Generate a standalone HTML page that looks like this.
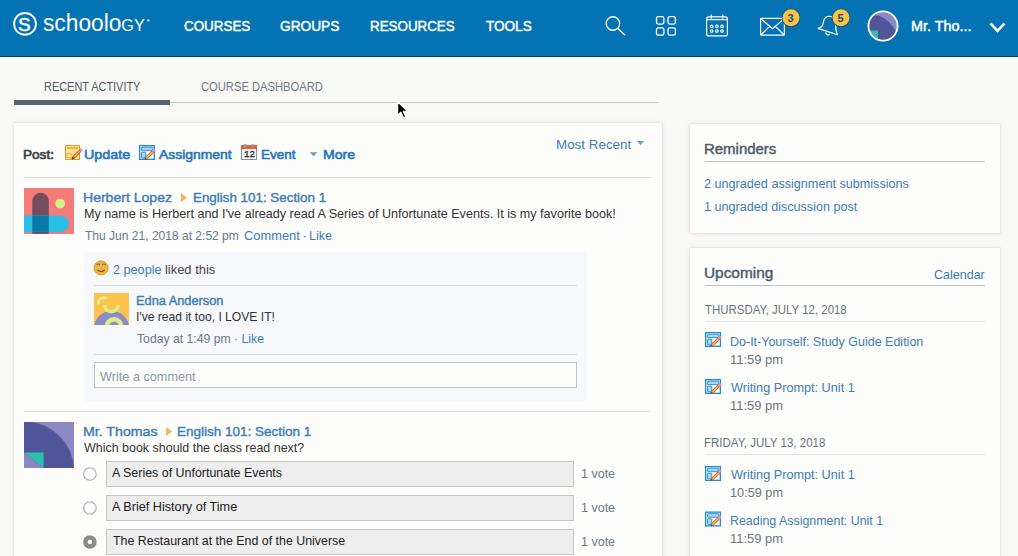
<!DOCTYPE html>
<html><head><meta charset="utf-8">
<style>
*{margin:0;padding:0;box-sizing:border-box}
html,body{width:1018px;height:556px;overflow:hidden;background:#f8f8f4;font-family:"Liberation Sans",sans-serif}
body{position:relative}
.r{position:absolute}
.a{position:absolute;white-space:nowrap;line-height:1;transform-origin:0 0}
.card{background:#fdfdfb;box-shadow:0 0 1px rgba(160,130,140,.35),0 0 4px rgba(205,175,185,.35)}
.opt{background:#eeeeee;border:1px solid #c6c6c6}
</style></head><body>
<div class="r" style="left:0;top:0;width:1018px;height:56px;background:#0373b3"></div>
<div class="r" style="left:0;top:56px;width:1018px;height:1px;background:#163a52"></div>
<div class="r" style="left:0;top:57px;width:1018px;height:1px;background:#fdfdfb"></div>
<!-- logo -->
<svg class="r" style="left:0;top:0" width="40" height="50" viewBox="0 0 40 50">
  <circle cx="25" cy="23.9" r="10.9" fill="none" stroke="#fff" stroke-width="1.9"/>
</svg>
<svg class="r" style="left:144px;top:16px" width="8" height="8" viewBox="144 16 8 8"><circle cx="148.3" cy="20.3" r="1.4" fill="#9cc3df"/></svg>
<!-- search -->
<svg class="r" style="left:600px;top:10px" width="30" height="30" viewBox="600 10 30 30">
  <circle cx="612.9" cy="23.5" r="6.75" fill="none" stroke="#fff" stroke-width="1.3"/>
  <line x1="617.9" y1="28.5" x2="625.2" y2="35.2" stroke="#fff" stroke-width="1.3"/>
</svg>
<!-- grid -->
<svg class="r" style="left:650px;top:10px" width="32" height="32" viewBox="650 10 32 32">
  <g fill="none" stroke="#fff" stroke-width="1.3">
  <rect x="656.5" y="16.7" width="7.4" height="7.4" rx="1.8"/>
  <rect x="668" y="16.7" width="7.4" height="7.4" rx="1.8"/>
  <rect x="656.5" y="27.8" width="7.4" height="7.4" rx="1.8"/>
  <rect x="668" y="27.8" width="7.4" height="7.4" rx="1.8"/>
  </g>
</svg>
<!-- calendar -->
<svg class="r" style="left:700px;top:10px" width="34" height="32" viewBox="700 10 34 32">
  <g fill="none" stroke="#fff" stroke-width="1.2">
  <rect x="706.6" y="16.9" width="20.8" height="19" rx="2.2"/>
  <line x1="706.6" y1="19.6" x2="727.4" y2="19.6"/>
  <line x1="711.2" y1="14.5" x2="711.2" y2="18.5"/>
  <line x1="722.8" y1="14.5" x2="722.8" y2="18.5"/>
  <circle cx="711.7" cy="26.4" r="1.25"/><circle cx="716.9" cy="26.4" r="1.25"/><circle cx="722" cy="26.4" r="1.25"/>
  <circle cx="711.7" cy="31" r="1.25"/><circle cx="716.9" cy="31" r="1.25"/><circle cx="722" cy="31" r="1.25"/>
  </g>
</svg>
<!-- mail -->
<svg class="r" style="left:755px;top:5px" width="50" height="36" viewBox="755 5 50 36">
  <g fill="none" stroke="#fff" stroke-width="1.2">
  <rect x="760.6" y="18.4" width="23.8" height="16.8" rx="0.8"/>
  <polyline points="760.8,18.6 772.5,28.8 784.2,18.6"/>
  <line x1="760.8" y1="35" x2="769.5" y2="26.5"/>
  <line x1="784.2" y1="35" x2="775.5" y2="26.5"/>
  </g>
  <circle cx="791" cy="17.8" r="9.3" fill="#1d4f73"/>
  <circle cx="791" cy="17.8" r="8.5" fill="#f9c34b"/>
</svg>
<div class="a" style="left:787.4px;top:13.2px;font-size:11px;font-weight:bold;color:#1c4a6b">3</div>
<!-- bell -->
<svg class="r" style="left:812px;top:5px" width="45" height="36" viewBox="812 5 45 36">
  <g fill="none" stroke="#fff" stroke-width="1.2" stroke-linejoin="round">
  <path d="M818.2,28.4 C822.5,27 823,25.5 823.5,21.5 C824.2,16.8 828,15.5 832,16.7 C835,17.8 836.5,20.5 835.8,24.5 C835.2,28.5 836,31 837.4,34.8 Z"/>
  <path d="M826.2,32.2 C825.2,34.5 828.2,35.8 830,34"/>
  </g>
  <circle cx="841" cy="17.8" r="9.3" fill="#1d4f73"/>
  <circle cx="841" cy="17.8" r="8.5" fill="#f9c34b"/>
</svg>
<div class="a" style="left:837.6px;top:13.2px;font-size:11px;font-weight:bold;color:#1c4a6b">5</div>
<!-- header avatar -->
<svg class="r" style="left:866px;top:9px" width="34" height="34" viewBox="866 9 34 34">
  <defs><clipPath id="hav"><circle cx="883" cy="26" r="14.2"/></clipPath></defs>
  <g clip-path="url(#hav)">
    <rect x="866" y="9" width="34" height="34" fill="#8b89c1"/>
    <circle cx="868.5" cy="44" r="30" fill="#50559a"/>
    <polygon points="868.5,30.5 878,30.5 878,41 " fill="#2fbfae"/>
  </g>
  <circle cx="883" cy="26" r="14.6" fill="none" stroke="#fff" stroke-width="1.8"/>
</svg>
<!-- chevron -->
<svg class="r" style="left:985px;top:15px" width="25" height="22" viewBox="985 15 25 22">
  <polyline points="990.5,23.3 997.5,30.8 1004.5,23.3" fill="none" stroke="#fff" stroke-width="2.6"/>
</svg>

<!-- tabs -->
<div class="r" style="left:14px;top:102px;width:645px;height:1px;background:#c5cbd1"></div>
<div class="r" style="left:14px;top:100px;width:156px;height:5px;background:#56636c"></div>

<!-- cards -->
<div class="r card" style="left:14px;top:123px;width:648px;height:460px"></div>
<div class="r card" style="left:690px;top:124px;width:310px;height:109px"></div>
<div class="r card" style="left:690px;top:248px;width:310px;height:340px"></div>

<!-- toolbar icons -->
<svg class="r" style="left:62px;top:142px" width="22" height="22" viewBox="62 142 22 22">
  <rect x="65.5" y="145.5" width="14" height="14" fill="#fde38a" stroke="#e09a3e" stroke-width="1"/>
  <rect x="67" y="147" width="11" height="2" fill="#f5b13f"/>
  <rect x="67" y="153.5" width="4" height="4" fill="none" stroke="#e3a252" stroke-width="0.8"/>
  <line x1="73" y1="158" x2="80.5" y2="150.5" stroke="#c4452c" stroke-width="2.8"/>
  <line x1="73.4" y1="157.6" x2="80" y2="151" stroke="#f8b850" stroke-width="1.4"/>
  <line x1="80" y1="151" x2="82" y2="149" stroke="#e58cc0" stroke-width="2.6"/>
  <line x1="72" y1="159" x2="73.5" y2="157.5" stroke="#5a3a36" stroke-width="1.8"/>
</svg>

<svg class="r" style="left:238px;top:141px" width="22" height="22" viewBox="238 141 22 22">
  <rect x="241.5" y="147.5" width="15" height="12" fill="#fff" stroke="#8a8f94" stroke-width="1"/>
  <rect x="241" y="145" width="16" height="4" fill="#ea5e2e"/>
  <rect x="244.2" y="144" width="2.2" height="3.6" fill="#8aa0b4"/>
  <rect x="251.6" y="144" width="2.2" height="3.6" fill="#8aa0b4"/>
  <rect x="242.5" y="149.5" width="13" height="9" fill="#eef1f4"/><text x="244.1" y="157" font-family="Liberation Mono" font-size="9" fill="#1a1a1a" stroke="#1a1a1a" stroke-width="0.25">12</text>
</svg>
<svg class="r" style="left:306px;top:150px" width="14" height="9" viewBox="306 150 14 9">
  <polygon points="309.6,152.3 317.4,152.3 313.5,156.3" fill="#6b9bcb"/>
</svg>
<svg class="r" style="left:634px;top:138px" width="14" height="9" viewBox="634 138 14 9">
  <polygon points="636.8,141 644.2,141 640.5,145" fill="#6b9bcb"/>
</svg>

<div class="r" style="left:24px;top:177px;width:627px;height:1px;background:#dedede"></div>

<!-- Herbert avatar -->
<svg class="r" style="left:24px;top:188px" width="50" height="46" viewBox="24 188 50 46">
  <rect x="24" y="188" width="50" height="46" fill="#f47b78"/>
  <path d="M32.3,234 V201 a8.25,8.25 0 0 1 16.5,0 V234 Z" fill="#744e5e"/>
  <path d="M24,215.5 H60.6 a8.2,8.2 0 0 1 0,16.4 H24 Z" fill="#29bfe9"/>
  <rect x="32.3" y="215.5" width="16.5" height="16.4" fill="#0a78a9"/>
  <circle cx="60.1" cy="203.6" r="4.9" fill="#d9f18a"/>
</svg>

<!-- liked box -->
<div class="r" style="left:84px;top:252px;width:503px;height:149px;background:#f7f8fb"></div>
<svg class="r" style="left:92px;top:259px" width="18" height="18" viewBox="92 259 18 18">
  <circle cx="101.1" cy="267.9" r="7" fill="#f3b533" stroke="#d98b2a" stroke-width="0.9"/>
  <ellipse cx="98.3" cy="266" rx="1.6" ry="1.2" fill="#a5b9dd"/>
  <ellipse cx="103.9" cy="266" rx="1.6" ry="1.2" fill="#a5b9dd"/>
  <path d="M96.6,264.6 Q98.3,263.4 100,264.6 M102.2,264.6 Q103.9,263.4 105.6,264.6" stroke="#7a3f1c" stroke-width="0.9" fill="none"/>
  <path d="M97.5,270 Q101.1,273 104.7,270" stroke="#8a4a1a" stroke-width="1.1" fill="none"/>
</svg>
<div class="r" style="left:94px;top:285px;width:483px;height:1px;background:#dcdcdc"></div>
<svg class="r" style="left:94px;top:293px" width="35" height="32" viewBox="94 293 35 32">
  <rect x="94" y="293" width="35" height="32" fill="#fcc24b"/>
  <circle cx="111.6" cy="328.4" r="17.5" fill="#8e8ac3"/>
  <path d="M98.4,304.3 A5.8,5.8 0 0 1 106.6,298.2" stroke="#d7f08b" stroke-width="2.9" fill="none"/>
  <path d="M104.6,305 A6.75,6.75 0 0 0 118.1,305" stroke="#d7f08b" stroke-width="3.3" fill="none"/>
  <path d="M106.9,326.5 A7.1,7.1 0 0 1 121.1,326.5" stroke="#d7f08b" stroke-width="4.6" fill="none"/>
</svg>
<div class="r" style="left:94px;top:354px;width:483px;height:1px;background:#dcdcdc"></div>
<div class="r" style="left:94px;top:362px;width:483px;height:26px;background:#fdfdfc;border:1px solid #c3c3c3"></div>

<div class="r" style="left:24px;top:411px;width:627px;height:1px;background:#e3e3e3"></div>

<!-- Mr Thomas avatar -->
<svg class="r" style="left:24px;top:422px" width="50" height="46" viewBox="24 422 50 46">
  <rect x="24" y="422" width="50" height="46" fill="#8b89c1"/>
  <circle cx="24" cy="471.5" r="50.1" fill="#4f5598"/>
  <polygon points="24,452.5 43.6,452.5 43.6,468" fill="#2ec0af"/>
  <polygon points="24,452.5 43.6,468 24,468" fill="#8b89c1"/>
</svg>

<!-- poll -->
<svg class="r" style="left:80px;top:460px" width="20" height="96" viewBox="80 460 20 96">
  <circle cx="89.9" cy="474" r="6.3" fill="#fff" stroke="#a9a9a9" stroke-width="1.1"/>
  <circle cx="89.9" cy="508" r="6.3" fill="#fff" stroke="#a9a9a9" stroke-width="1.1"/>
  <circle cx="89.9" cy="542" r="6.8" fill="#8c8c8c"/>
  <circle cx="89.9" cy="542" r="2.3" fill="#fff"/>
</svg>
<div class="r opt" style="left:106px;top:461px;width:468px;height:26px"></div>
<div class="r opt" style="left:106px;top:495px;width:468px;height:26px"></div>
<div class="r opt" style="left:106px;top:529px;width:468px;height:26px"></div>

<!-- sidebar -->
<div class="r" style="left:705px;top:161px;width:280px;height:1px;background:#bcc4cc"></div>
<div class="r" style="left:705px;top:285px;width:280px;height:1px;background:#bcc4cc"></div>
<div class="r" style="left:705px;top:321px;width:280px;height:1px;background:#e6e6e6"></div>
<div class="r" style="left:705px;top:454px;width:280px;height:1px;background:#e6e6e6"></div>

<svg class="r" style="left:0;top:0;pointer-events:none" width="1018" height="556" viewBox="0 0 1018 556">
  
  <g transform="translate(705,332)">
      <rect x="0.65" y="0.65" width="14.7" height="13.7" fill="#fff" stroke="#1f8ad2" stroke-width="1.3"/>
      <rect x="2.4" y="2.2" width="11.4" height="3.5" rx="0.6" fill="#a9d4f2" stroke="#1f8ad2" stroke-width="0.9"/>
      <rect x="2.4" y="7.2" width="4.4" height="5.7" rx="0.6" fill="#a9d4f2" stroke="#1f8ad2" stroke-width="0.9"/>
      <line x1="6.6" y1="13.8" x2="14" y2="6.4" stroke="#cf5a2c" stroke-width="2.9"/>
      <line x1="7" y1="13.4" x2="13.6" y2="6.8" stroke="#f9c24e" stroke-width="1.4"/>
      <line x1="13.8" y1="6.6" x2="15.8" y2="4.6" stroke="#e98ac4" stroke-width="2.7"/>
      <line x1="6" y1="14.4" x2="7.2" y2="13.2" stroke="#6a4a3a" stroke-width="1.6"/>
    </g>
  <g transform="translate(139,145)">
      <rect x="0.65" y="0.65" width="14.7" height="13.7" fill="#fff" stroke="#1f8ad2" stroke-width="1.3"/>
      <rect x="2.4" y="2.2" width="11.4" height="3.5" rx="0.6" fill="#a9d4f2" stroke="#1f8ad2" stroke-width="0.9"/>
      <rect x="2.4" y="7.2" width="4.4" height="5.7" rx="0.6" fill="#a9d4f2" stroke="#1f8ad2" stroke-width="0.9"/>
      <line x1="6.6" y1="13.8" x2="14" y2="6.4" stroke="#cf5a2c" stroke-width="2.9"/>
      <line x1="7" y1="13.4" x2="13.6" y2="6.8" stroke="#f9c24e" stroke-width="1.4"/>
      <line x1="13.8" y1="6.6" x2="15.8" y2="4.6" stroke="#e98ac4" stroke-width="2.7"/>
      <line x1="6" y1="14.4" x2="7.2" y2="13.2" stroke="#6a4a3a" stroke-width="1.6"/>
    </g>
  <g transform="translate(705,379)">
      <rect x="0.65" y="0.65" width="14.7" height="13.7" fill="#fff" stroke="#1f8ad2" stroke-width="1.3"/>
      <rect x="2.4" y="2.2" width="11.4" height="3.5" rx="0.6" fill="#a9d4f2" stroke="#1f8ad2" stroke-width="0.9"/>
      <rect x="2.4" y="7.2" width="4.4" height="5.7" rx="0.6" fill="#a9d4f2" stroke="#1f8ad2" stroke-width="0.9"/>
      <line x1="6.6" y1="13.8" x2="14" y2="6.4" stroke="#cf5a2c" stroke-width="2.9"/>
      <line x1="7" y1="13.4" x2="13.6" y2="6.8" stroke="#f9c24e" stroke-width="1.4"/>
      <line x1="13.8" y1="6.6" x2="15.8" y2="4.6" stroke="#e98ac4" stroke-width="2.7"/>
      <line x1="6" y1="14.4" x2="7.2" y2="13.2" stroke="#6a4a3a" stroke-width="1.6"/>
    </g>
  <g transform="translate(705,466)">
      <rect x="0.65" y="0.65" width="14.7" height="13.7" fill="#fff" stroke="#1f8ad2" stroke-width="1.3"/>
      <rect x="2.4" y="2.2" width="11.4" height="3.5" rx="0.6" fill="#a9d4f2" stroke="#1f8ad2" stroke-width="0.9"/>
      <rect x="2.4" y="7.2" width="4.4" height="5.7" rx="0.6" fill="#a9d4f2" stroke="#1f8ad2" stroke-width="0.9"/>
      <line x1="6.6" y1="13.8" x2="14" y2="6.4" stroke="#cf5a2c" stroke-width="2.9"/>
      <line x1="7" y1="13.4" x2="13.6" y2="6.8" stroke="#f9c24e" stroke-width="1.4"/>
      <line x1="13.8" y1="6.6" x2="15.8" y2="4.6" stroke="#e98ac4" stroke-width="2.7"/>
      <line x1="6" y1="14.4" x2="7.2" y2="13.2" stroke="#6a4a3a" stroke-width="1.6"/>
    </g>
  <g transform="translate(705,511.5)">
      <rect x="0.65" y="0.65" width="14.7" height="13.7" fill="#fff" stroke="#1f8ad2" stroke-width="1.3"/>
      <rect x="2.4" y="2.2" width="11.4" height="3.5" rx="0.6" fill="#a9d4f2" stroke="#1f8ad2" stroke-width="0.9"/>
      <rect x="2.4" y="7.2" width="4.4" height="5.7" rx="0.6" fill="#a9d4f2" stroke="#1f8ad2" stroke-width="0.9"/>
      <line x1="6.6" y1="13.8" x2="14" y2="6.4" stroke="#cf5a2c" stroke-width="2.9"/>
      <line x1="7" y1="13.4" x2="13.6" y2="6.8" stroke="#f9c24e" stroke-width="1.4"/>
      <line x1="13.8" y1="6.6" x2="15.8" y2="4.6" stroke="#e98ac4" stroke-width="2.7"/>
      <line x1="6" y1="14.4" x2="7.2" y2="13.2" stroke="#6a4a3a" stroke-width="1.6"/>
    </g>
  <polygon points="180.8,192.9 187,197.4 180.8,201.9" fill="#f5b05a"/>
  <polygon points="166.2,427 172,431.5 166.2,436" fill="#f5b05a"/>
  <polygon points="397.6,101.8 397.6,115.2 400.9,112.2 403.5,117.8 405.8,116.8 403.3,111.4 407.8,111.4" fill="#000" stroke="#fff" stroke-width="1.2" stroke-linejoin="round"/>
</svg>

<div class="a" id="logoS" style="left:18.48px;top:16.50px;font-size:17.6px;color:#fff;-webkit-text-stroke:0.45px #fff;transform:scaleX(1.0742)">S</div>
<div class="a" id="logo" style="left:42.98px;top:12.32px;font-size:23px;color:#fff;transform:scaleX(0.9885)">schoolo<span style='font-size:16.4px'>GY</span></div>
<div class="a" id="nav1" style="left:184.38px;top:19.01px;font-size:14px;color:#fff;-webkit-text-stroke:0.45px #fff;transform:scaleX(0.9574)">COURSES</div>
<div class="a" id="nav2" style="left:280.41px;top:18.82px;font-size:14px;color:#fff;-webkit-text-stroke:0.45px #fff;transform:scaleX(0.9776)">GROUPS</div>
<div class="a" id="nav3" style="left:369.81px;top:18.82px;font-size:14px;color:#fff;-webkit-text-stroke:0.45px #fff;transform:scaleX(0.9547)">RESOURCES</div>
<div class="a" id="nav4" style="left:486.22px;top:18.82px;font-size:14px;color:#fff;-webkit-text-stroke:0.45px #fff;transform:scaleX(0.9674)">TOOLS</div>
<div class="a" id="user" style="left:910.58px;top:18.91px;font-size:14px;color:#fff;-webkit-text-stroke:0.45px #fff;transform:scaleX(1.0278)">Mr. Tho...</div>
<div class="a" id="tab1" style="left:43.58px;top:80.91px;font-size:12.5px;color:#4f5c66;transform:scaleX(0.8748)">RECENT ACTIVITY</div>
<div class="a" id="tab2" style="left:200.55px;top:80.91px;font-size:12.5px;color:#6f7b86;transform:scaleX(0.8949)">COURSE DASHBOARD</div>
<div class="a" id="post" style="left:23.40px;top:147.81px;font-size:13px;color:#3b4146;-webkit-text-stroke:0.65px #3b4146;transform:scaleX(1.0435)">Post:</div>
<div class="a" id="upd" style="left:84.33px;top:147.81px;font-size:13px;color:#2678b8;-webkit-text-stroke:0.6px #2678b8;transform:scaleX(1.1024)">Update</div>
<div class="a" id="asg" style="left:159.00px;top:147.81px;font-size:13px;color:#2678b8;-webkit-text-stroke:0.6px #2678b8;transform:scaleX(1.0696)">Assignment</div>
<div class="a" id="evt" style="left:260.59px;top:147.81px;font-size:13px;color:#2678b8;-webkit-text-stroke:0.6px #2678b8;transform:scaleX(1.0411)">Event</div>
<div class="a" id="more" style="left:323.10px;top:147.81px;font-size:13px;color:#2678b8;-webkit-text-stroke:0.6px #2678b8;transform:scaleX(1.0851)">More</div>
<div class="a" id="recent" style="left:556.47px;top:137.91px;font-size:13px;color:#3e7fba;transform:scaleX(1.0308)">Most Recent</div>
<div class="a" id="n1" style="left:83.44px;top:190.91px;font-size:13px;color:#3e7db6;-webkit-text-stroke:0.4px #3e7db6;transform:scaleX(1.0800)">Herbert Lopez</div>
<div class="a" id="c1" style="left:192.52px;top:190.91px;font-size:13px;color:#3e7db6;-webkit-text-stroke:0.4px #3e7db6;transform:scaleX(1.0291)">English 101: Section 1</div>
<div class="a" id="b1" style="left:83.51px;top:207.00px;font-size:13px;color:#333;transform:scaleX(0.9690)">My name is Herbert and I've already read A Series of Unfortunate Events. It is my favorite book!</div>
<div class="a" id="d1" style="left:85.00px;top:228.82px;font-size:13px;color:#6b7886;transform:scaleX(0.9254)">Thu Jun 21, 2018 at 2:52 pm</div>
<div class="a" id="cm1" style="left:244.00px;top:228.82px;font-size:13px;color:#3a7fbf;transform:scaleX(0.9903)">Comment</div>
<div class="a" id="dot1" style="left:302.50px;top:228.82px;font-size:13px;color:#6b7886;transform:scaleX(1.0000)">&middot;</div>
<div class="a" id="lk1" style="left:308.55px;top:228.82px;font-size:13px;color:#3a7fbf;transform:scaleX(0.9666)">Like</div>
<div class="a" id="ppl" style="left:113.46px;top:262.71px;font-size:13px;color:#3a7fbf;transform:scaleX(0.9725)">2 people</div>
<div class="a" id="liked" style="left:164.97px;top:262.71px;font-size:13px;color:#444;transform:scaleX(0.9929)">liked this</div>
<div class="a" id="n2" style="left:135.50px;top:293.60px;font-size:13px;color:#3e7db6;-webkit-text-stroke:0.4px #3e7db6;transform:scaleX(0.9833)">Edna Anderson</div>
<div class="a" id="b2" style="left:135.52px;top:310.00px;font-size:13px;color:#333;transform:scaleX(0.9312)">I've read it too, I LOVE IT!</div>
<div class="a" id="d2" style="left:136.53px;top:332.21px;font-size:13px;color:#6b7886;transform:scaleX(0.9393)">Today at 1:49 pm &middot; <span style='color:#3a7fbf'>Like</span></div>
<div class="a" id="wc" style="left:99.98px;top:369.91px;font-size:13px;color:#8c98a4;transform:scaleX(0.9757)">Write a comment</div>
<div class="a" id="n3" style="left:82.94px;top:425.10px;font-size:13px;color:#3e7db6;-webkit-text-stroke:0.4px #3e7db6;transform:scaleX(1.0900)">Mr. Thomas</div>
<div class="a" id="c3" style="left:176.97px;top:425.10px;font-size:13px;color:#3e7db6;-webkit-text-stroke:0.4px #3e7db6;transform:scaleX(1.0369)">English 101: Section 1</div>
<div class="a" id="b3" style="left:83.98px;top:441.00px;font-size:13px;color:#333;transform:scaleX(0.9583)">Which book should the class read next?</div>
<div class="a" id="o1" style="left:112.49px;top:466.32px;font-size:13px;color:#222;transform:scaleX(0.9562)">A Series of Unfortunate Events</div>
<div class="a" id="o2" style="left:112.48px;top:500.21px;font-size:13px;color:#222;transform:scaleX(0.9737)">A Brief History of Time</div>
<div class="a" id="o3" style="left:113.01px;top:534.21px;font-size:13px;color:#222;transform:scaleX(0.9531)">The Restaurant at the End of the Universe</div>
<div class="a" id="v1" style="left:581.47px;top:467.10px;font-size:13px;color:#6b7a88;transform:scaleX(0.9620)">1 vote</div>
<div class="a" id="v2" style="left:581.47px;top:500.91px;font-size:13px;color:#6b7a88;transform:scaleX(0.9620)">1 vote</div>
<div class="a" id="v3" style="left:581.47px;top:534.91px;font-size:13px;color:#6b7a88;transform:scaleX(0.9620)">1 vote</div>
<div class="a" id="rem" style="left:704.03px;top:142.01px;font-size:14.5px;color:#4b5a66;-webkit-text-stroke:0.4px #4b5a66;transform:scaleX(1.0316)">Reminders</div>
<div class="a" id="r1" style="left:704.00px;top:178.00px;font-size:12.5px;color:#3e7db7;transform:scaleX(1.0099)">2 ungraded assignment submissions</div>
<div class="a" id="r2" style="left:703.99px;top:201.00px;font-size:12.5px;color:#3e7db7;transform:scaleX(1.0067)">1 ungraded discussion post</div>
<div class="a" id="upc" style="left:704.48px;top:266.01px;font-size:14.5px;color:#4b5a66;-webkit-text-stroke:0.4px #4b5a66;transform:scaleX(1.0614)">Upcoming</div>
<div class="a" id="cal" style="left:934.00px;top:267.60px;font-size:13px;color:#3e7db7;transform:scaleX(0.9626)">Calendar</div>
<div class="a" id="day1" style="left:705.47px;top:304.00px;font-size:12.5px;color:#6a747c;transform:scaleX(0.9162)">THURSDAY, JULY 12, 2018</div>
<div class="a" id="e1" style="left:730.04px;top:335.41px;font-size:13px;color:#3e7db7;transform:scaleX(0.9610)">Do-It-Yourself: Study Guide Edition</div>
<div class="a" id="t1" style="left:730.00px;top:353.00px;font-size:13px;color:#6c757d;transform:scaleX(0.9965)">11:59 pm</div>
<div class="a" id="e2" style="left:731.00px;top:380.71px;font-size:13px;color:#3e7db7;transform:scaleX(0.9749)">Writing Prompt: Unit 1</div>
<div class="a" id="t2" style="left:730.00px;top:398.50px;font-size:13px;color:#6c757d;transform:scaleX(0.9965)">11:59 pm</div>
<div class="a" id="day2" style="left:704.08px;top:436.61px;font-size:12.5px;color:#6a747c;transform:scaleX(0.9207)">FRIDAY, JULY 13, 2018</div>
<div class="a" id="e3" style="left:731.00px;top:467.71px;font-size:13px;color:#3e7db7;transform:scaleX(0.9749)">Writing Prompt: Unit 1</div>
<div class="a" id="t3" style="left:730.02px;top:486.00px;font-size:13px;color:#6c757d;transform:scaleX(0.9777)">10:59 pm</div>
<div class="a" id="e4" style="left:730.06px;top:513.82px;font-size:13px;color:#3e7db7;transform:scaleX(0.9548)">Reading Assignment: Unit 1</div>
<div class="a" id="t4" style="left:730.00px;top:531.50px;font-size:13px;color:#6c757d;transform:scaleX(0.9965)">11:59 pm</div>
</body></html>
